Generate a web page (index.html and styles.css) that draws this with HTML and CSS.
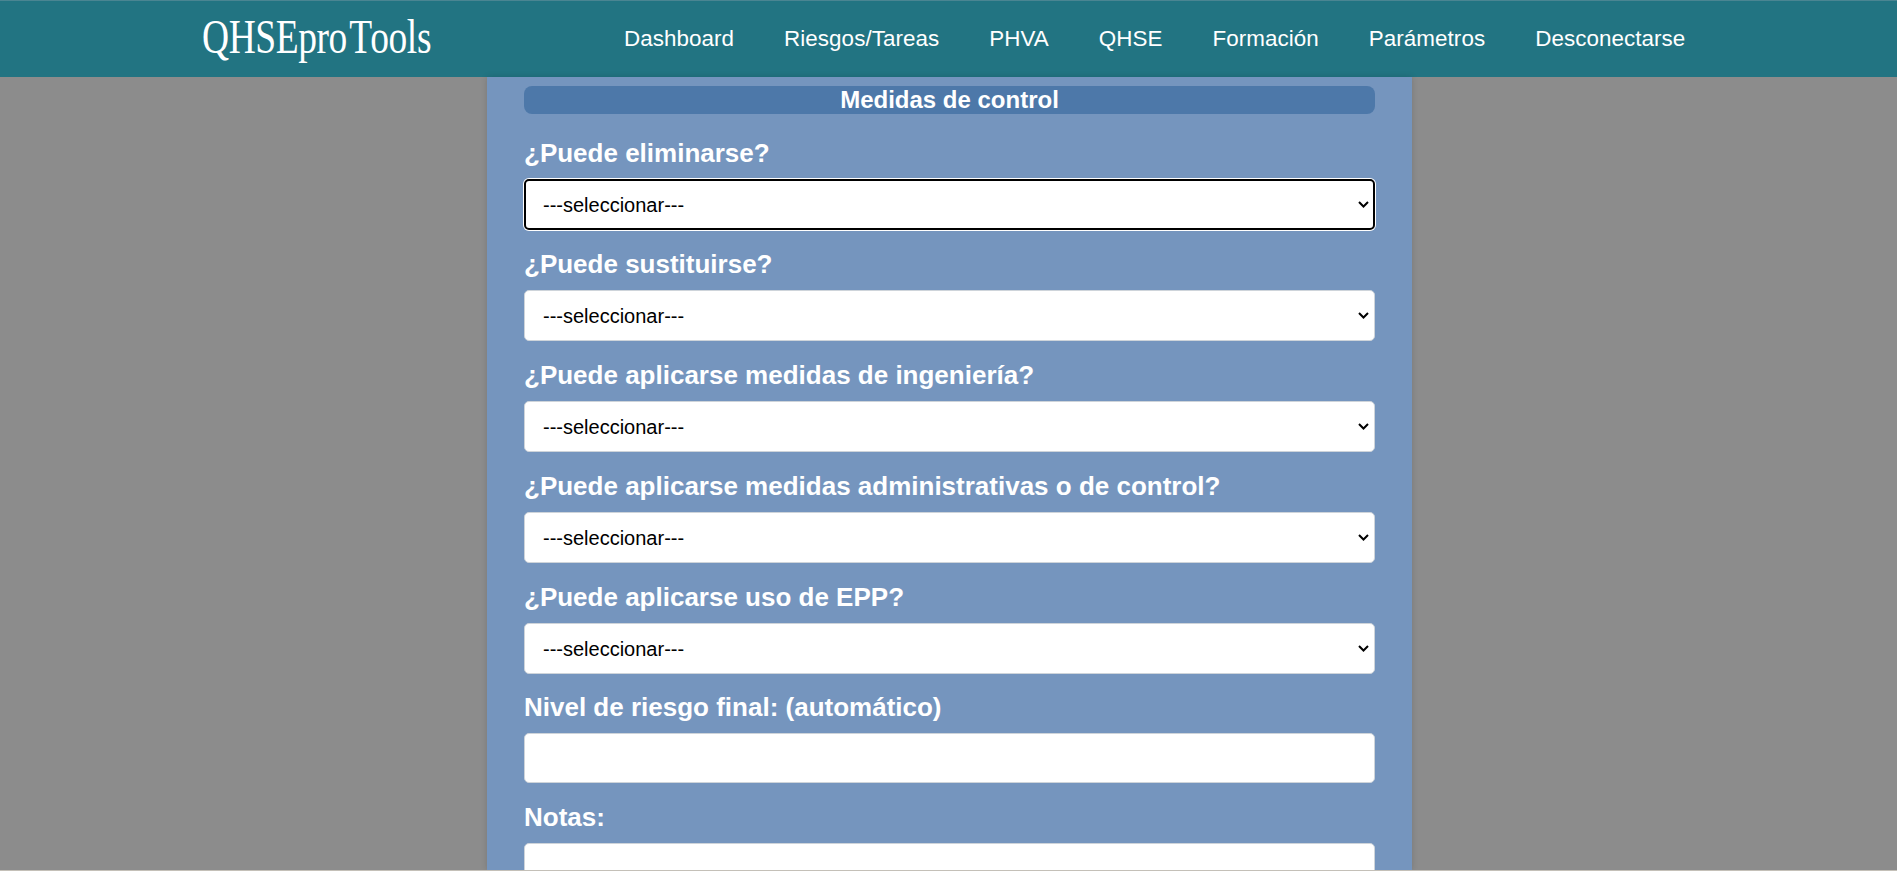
FILE: index.html
```html
<!DOCTYPE html>
<html lang="es">
<head>
<meta charset="utf-8">
<title>QHSEproTools</title>
<link rel="stylesheet" href="styles.css">
</head>
<body>
<header class="navbar">
  <a class="brand" href="#"><span class="brand-text">QHSEpro<span class="brand-t">T</span>ools</span></a>
  <nav class="nav-links">
    <a href="#">Dashboard</a>
    <a href="#">Riesgos/Tareas</a>
    <a href="#">PHVA</a>
    <a href="#">QHSE</a>
    <a href="#">Formación</a>
    <a href="#">Parámetros</a>
    <a href="#">Desconectarse</a>
  </nav>
</header>
<main class="card">
  <h2 class="section-title">Medidas de control</h2>
  <form class="form">
    <div class="field">
      <label>¿Puede eliminarse?</label>
      <div class="select-wrap">
        <select class="control is-focused"><option>---seleccionar---</option></select>
        <svg class="chevron" viewBox="0 0 11 7" aria-hidden="true"><path d="M1 1l4.5 4.5L10 1"/></svg>
      </div>
    </div>
    <div class="field">
      <label>¿Puede sustituirse?</label>
      <div class="select-wrap">
        <select class="control"><option>---seleccionar---</option></select>
        <svg class="chevron" viewBox="0 0 11 7" aria-hidden="true"><path d="M1 1l4.5 4.5L10 1"/></svg>
      </div>
    </div>
    <div class="field">
      <label>¿Puede aplicarse medidas de ingeniería?</label>
      <div class="select-wrap">
        <select class="control"><option>---seleccionar---</option></select>
        <svg class="chevron" viewBox="0 0 11 7" aria-hidden="true"><path d="M1 1l4.5 4.5L10 1"/></svg>
      </div>
    </div>
    <div class="field">
      <label>¿Puede aplicarse medidas administrativas o de control?</label>
      <div class="select-wrap">
        <select class="control"><option>---seleccionar---</option></select>
        <svg class="chevron" viewBox="0 0 11 7" aria-hidden="true"><path d="M1 1l4.5 4.5L10 1"/></svg>
      </div>
    </div>
    <div class="field">
      <label>¿Puede aplicarse uso de EPP?</label>
      <div class="select-wrap">
        <select class="control"><option>---seleccionar---</option></select>
        <svg class="chevron" viewBox="0 0 11 7" aria-hidden="true"><path d="M1 1l4.5 4.5L10 1"/></svg>
      </div>
    </div>
    <div class="field field-first-input">
      <label>Nivel de riesgo final: (automático)</label>
      <input class="control control-input" type="text">
    </div>
    <div class="field">
      <label>Notas:</label>
      <input class="control control-input" type="text">
    </div>
  </form>
</main>
<div class="window-edge"></div>
</body>
</html>
```
FILE: styles.css
```css
* { box-sizing: border-box; }
html, body { height: 871px; overflow: hidden; }
body {
  margin: 0;
  background: #8c8c8c;
  font-family: "Liberation Sans", Arial, sans-serif;
  display: flex;
  flex-direction: column;
  align-items: center;
}
.navbar {
  flex: none;
  width: 100%;
  height: 77px;
  background: #227482;
  border-top: 1px solid #4a8592;
  display: flex;
  align-items: center;
  padding: 0 0 0 202px;
}
.brand {
  font-family: "Liberation Serif", serif;
  font-size: 48px;
  line-height: 50px;
  color: #fff;
  text-decoration: none;
  width: 422px;
  flex: none;
  padding-bottom: 5px;
}
.brand-text {
  display: inline-block;
  transform: scaleX(.78);
  transform-origin: left center;
  white-space: nowrap;
  letter-spacing: -.5px;
}
.brand-t { margin-left: 3px; margin-right: -2px; }
.nav-links { display: flex; gap: 50px; }
.nav-links a { color: #fff; text-decoration: none; font-size: 22.4px; letter-spacing: .06px; }
.card {
  flex: 1;
  min-height: 0;
  width: 925px;
  margin-left: 2px;
  background: #7595be;
  padding: 9px 37px 0;
  box-shadow: 0 0 6px rgba(0,0,0,.15);
  overflow: hidden;
}
.section-title {
  margin: 0;
  height: 28px;
  line-height: 28px;
  border-radius: 8px;
  background: #4d78a9;
  color: #fff;
  font-size: 24px;
  font-weight: 700;
  text-align: center;
}
.form { display: flex; flex-direction: column; gap: 14px; margin-top: 19px; }
.field { display: flex; flex-direction: column; gap: 6px; }
.field-first-input { margin-top: -1px; }
.field label { color: #fff; font-size: 26px; font-weight: 700; line-height: 40px; }
.select-wrap { position: relative; }
.control {
  display: block;
  width: 100%;
  height: 51px;
  flex: none;
  padding: 0 18px;
  border: 1px solid #ced4da;
  border-radius: 5px;
  background: #fff;
  color: #000;
  font: 20px "Liberation Sans", Arial, sans-serif;
  appearance: none;
}
.control-input { height: 50px; }
.is-focused { border: 2px solid #000; padding: 0 17px; box-shadow: 0 0 0 1px #fff; outline: none; }
.chevron {
  position: absolute;
  top: 22px;
  right: 6px;
  width: 11px;
  height: 7px;
  pointer-events: none;
  fill: none;
  stroke: #000;
  stroke-width: 2;
}
.window-edge { flex: none; width: 100%; height: 1px; background: #c4c0b8; position: relative; }
```
